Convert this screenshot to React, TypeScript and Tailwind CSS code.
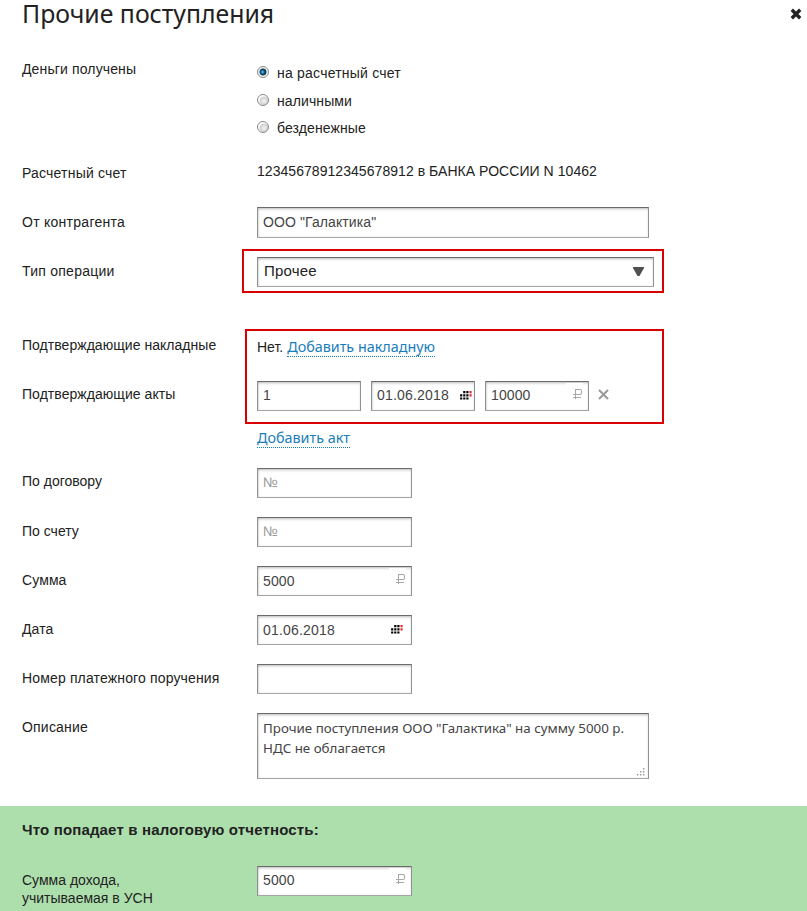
import React, { useState } from 'react';
import clsx from 'clsx';

interface RowProps {
  label: React.ReactNode;
  className?: string;
  labelClassName?: string;
  children?: React.ReactNode;
}

interface FieldProps {
  value?: string;
  placeholder?: string;
  className?: string;
  inputClassName?: string;
  icon?: React.ReactNode;
}

const fieldBox =
  'border border-t-[#6b6b6b] border-l-[#919191] border-r-[#919191] border-b-[#a5a5a5] bg-white shadow-[inset_0_2px_3px_-1px_rgba(0,0,0,0.25),inset_1px_0_2px_rgba(0,0,0,0.1)]';

const paymentKinds = [
  { name: 'на расчетный счет', className: 'h-[18px] tracking-[0.22px]' },
  { name: 'наличными', className: 'h-[19px] pt-px tracking-[0.1px]' },
  { name: 'безденежные', className: 'h-[18px] tracking-[0.1px]' },
];

const Row: React.FC<RowProps> = ({ label, className, labelClassName, children }) => (
  <div className={clsx('flex shrink-0 pl-[22px]', className)}>
    <div className={clsx('w-[235px] shrink-0 leading-[18px]', labelClassName ?? 'pt-1')}>{label}</div>
    <div>{children}</div>
  </div>
);

const Field: React.FC<FieldProps> = ({ value = '', placeholder, className, inputClassName, icon }) => (
  <div className={clsx('flex items-center', fieldBox, className ?? 'h-[30px] w-[155px]')}>
    <input
      type="text"
      defaultValue={value}
      placeholder={placeholder}
      className={clsx(
        'min-w-0 flex-1 bg-transparent pl-[5px] text-[#444] outline-none placeholder:text-[#999]',
        inputClassName ?? 'tracking-[0.1px]'
      )}
    />
    {icon}
  </div>
);

const Ruble = () => (
  <span className="mt-px mr-[5px] flex h-[18px] w-[17px] shrink-0 justify-end self-start bg-white pt-[6px]">
    <svg width="10" height="10" viewBox="0 0 10 10" fill="none" stroke="#a8a8a8" strokeWidth="1.1">
      <path d="M2.5 10V.5H7A1.5 1.5 0 0 1 8.5 2v2A1.5 1.5 0 0 1 7 5.5H0M0 8.5h8" />
    </svg>
  </span>
);

const CalendarIcon = ({ className = 'mr-[7px]' }: { className?: string }) => (
  <svg width="13" height="10" viewBox="0 0 13 10" className={clsx('shrink-0', className)} fill="#000">
    <path d="M3.2 0h2.2v2.2H3.2zM6.3 0h2.2v2.2H6.3zM.1 3.2h2.2v2.2H.1zM3.2 3.2h2.2v2.2H3.2zM6.3 3.2h2.2v2.2H6.3zM.1 6.4h2.2v2.2H.1zM3.2 6.4h2.2v2.2H3.2zM6.3 6.4h2.2v2.2H6.3z" />
    <path fill="#e8202c" d="M9.5 0h2.1v2.2H9.5zM9.5 3.2h2.1v2.2H9.5z" />
  </svg>
);

const AddLink: React.FC<{ children: React.ReactNode; className?: string }> = ({ children, className }) => (
  <a
    href="#"
    className={clsx(
      "inline-block h-[19px] border-b border-dotted border-[#1a7dbb] font-['Noto_Sans',sans-serif] text-[14.35px] leading-[18px] text-[#1a7dbb]",
      className
    )}
  >
    {children}
  </a>
);

export default function App() {
  const [kind, setKind] = useState(0);

  return (
    <div className="flex h-[911px] w-[807px] flex-col overflow-hidden bg-white font-['Liberation_Sans',Arial,sans-serif] text-[14px] text-[#222]">
      <header className="flex h-14 shrink-0 justify-between pr-[5px] pl-[22px]">
        <h1 className="font-['Noto_Sans',sans-serif] text-[24.8px] leading-[26px]">Прочие поступления</h1>
        <button type="button" aria-label="Закрыть" className="mt-2 h-3 w-3">
          <svg width="12" height="12" viewBox="0 0 12 12" stroke="#222" strokeWidth="3.4">
            <path d="M1.8 1.8l8.4 8.4M10.2 1.8l-8.4 8.4" />
          </svg>
        </button>
      </header>

      <Row label="Деньги получены" className="h-[104px]" labelClassName="pt-1 tracking-[0.13px]">
        <div className="flex flex-col gap-[9px] pt-2">
          {paymentKinds.map(({ name, className }, i) => (
            <label key={name} className={clsx('flex items-center', className)}>
              <input
                type="radio"
                name="kind"
                checked={kind === i}
                onChange={() => setKind(i)}
                className="mr-2 mb-0.5 h-3 w-3 appearance-none rounded-full border border-[#8a8a8a] bg-[radial-gradient(circle_at_6px_6px,#f5f5f5_0,#d0d0d0_4px,#fff_5px)] checked:bg-[radial-gradient(circle_at_4.5px_5px,#6cc8f0_0,#2f8fc0_1px,transparent_2.5px),radial-gradient(circle_at_5px_5px,#0e3d5e_0,#0e3d5e_3px,#f2f2f2_4px)]"
              />
              {name}
            </label>
          ))}
        </div>
      </Row>

      <Row label="Расчетный счет" className="h-[47px]" labelClassName="pt-1 tracking-[0.2px]">
        <div className="pt-0.5 leading-[18px] tracking-[0.05px]">12345678912345678912 в БАНКА РОССИИ N 10462</div>
      </Row>

      <Row label="От контрагента" className="h-[50px]" labelClassName="pt-1.5 tracking-[0.27px]">
        <Field value={'ООО "Галактика"'} className="h-[31px] w-[392px]" />
      </Row>

      <Row label="Тип операции" className="h-[75px]" labelClassName="pt-[5px] tracking-[0.25px]">
        <div className="relative">
          <div className="pointer-events-none absolute -top-2 -left-[15px] h-11 w-[422px] border-2 border-[#d80000]" />
          <div className={clsx('flex h-[30px] w-[397px] items-center justify-between pr-[9px] pb-px pl-1.5', fieldBox)}>
            <span className="pb-px text-[15px] tracking-[0.2px]">Прочее</span>
            <svg width="11" height="9" viewBox="0 0 11 9" fill="#505050">
              <path d="M0 0h11v1L6.5 9h-2L0 1z" />
            </svg>
          </div>
        </div>
      </Row>

      <Row label="Подтверждающие накладные" className="h-[49px]" labelClassName="pt-1 tracking-[0.04px]">
        <div className="relative flex pt-1.5 leading-[18px]">
          <div className="pointer-events-none absolute -top-[3px] -left-3 h-[95px] w-[419px] border-2 border-[#d80000]" />
          <span className="mr-1">Нет.</span>
          <AddLink>Добавить накладную</AddLink>
        </div>
      </Row>

      <Row label="Подтверждающие акты" className="h-[87px]" labelClassName="pt-1 tracking-[0.05px]">
        <div className="flex items-center gap-2.5">
          <Field value="1" className="h-[30px] w-[104px]" inputClassName="pb-px" />
          <Field
            value="01.06.2018"
            className="h-[30px] w-[104px]"
            inputClassName="pb-px tracking-[0.2px]"
            icon={<CalendarIcon className="mr-px" />}
          />
          <Field value="10000" className="h-[30px] w-[104px]" inputClassName="pb-px tracking-[0.1px]" icon={<Ruble />} />
          <button type="button" aria-label="Удалить" className="-ml-px pb-[3px]">
            <svg width="11" height="11" viewBox="0 0 11 11" stroke="#999" strokeWidth="2" className="block">
              <path d="M1 1l9 9M10 1l-9 9" />
            </svg>
          </button>
        </div>
        <AddLink className="mt-[18px]">Добавить акт</AddLink>
      </Row>

      <Row label="По договору" className="h-[49px]">
        <Field placeholder="№" inputClassName="pb-0.5" />
      </Row>
      <Row label="По счету" className="h-[49px]" labelClassName="pt-[5px]">
        <Field placeholder="№" inputClassName="pb-0.5" />
      </Row>
      <Row label="Сумма" className="h-[49px]" labelClassName="pt-[5px] tracking-[0.1px]">
        <Field value="5000" icon={<Ruble />} />
      </Row>
      <Row label="Дата" className="h-[49px]" labelClassName="pt-[5px] tracking-[0.1px]">
        <Field value="01.06.2018" inputClassName="tracking-[0.2px]" icon={<CalendarIcon />} />
      </Row>
      <Row label="Номер платежного поручения" className="h-[49px]" labelClassName="pt-[5px] tracking-[0.15px]">
        <Field />
      </Row>

      <Row label="Описание" className="h-[93px]" labelClassName="pt-[5px] tracking-[0.2px]">
        <div className={clsx('relative h-[66px] w-[392px]', fieldBox)}>
          <textarea
            className="h-full w-full resize-none pt-1 pl-[5px] font-['Noto_Sans',sans-serif] text-[13.35px] leading-5 text-[#444] outline-none"
            defaultValue={'Прочие поступления ООО "Галактика" на сумму 5000 р.\nНДС не облагается'}
          />
          <svg width="8" height="8" viewBox="0 0 8 8" fill="#999" className="absolute right-[3px] bottom-0.5">
            <path d="M6 0h1.4v1.4H6zM3 3h1.4v1.4H3zM6 3h1.4v1.4H6zM0 6h1.4v1.4H0zM3 6h1.4v1.4H3zM6 6h1.4v1.4H6z" />
          </svg>
        </div>
      </Row>

      <section className="flex-1 bg-[#addfad]">
        <h2 className="h-[60px] pt-[15px] pl-[22px] text-[15px] leading-[18px] font-bold tracking-[0.16px]">
          Что попадает в налоговую отчетность:
        </h2>
        <Row
          label={
            <>
              Сумма дохода,
              <br />
              учитываемая в УСН
            </>
          }
          labelClassName="pt-[5px]"
        >
          <Field value="5000" inputClassName="pb-px tracking-[0.1px]" icon={<Ruble />} />
        </Row>
      </section>
    </div>
  );
}
